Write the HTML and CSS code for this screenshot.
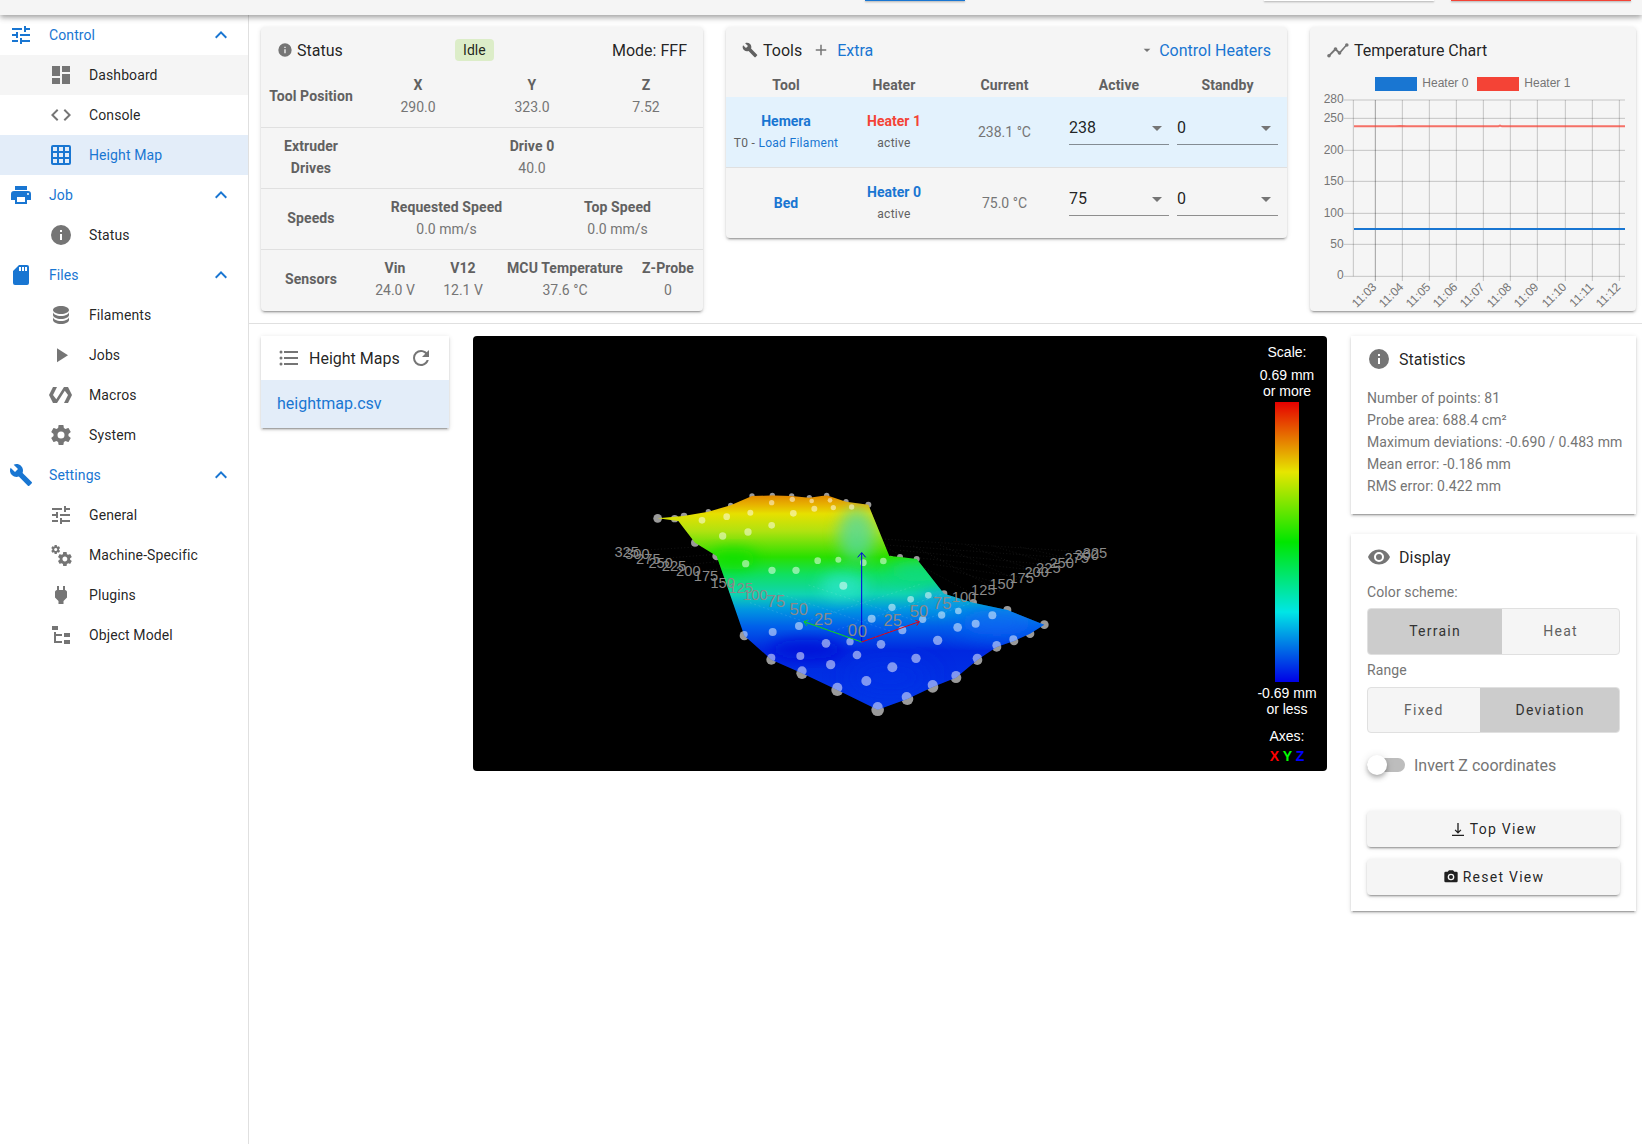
FILE: index.html
```html
<!DOCTYPE html>
<html lang="en">
<head>
<meta charset="utf-8">
<title>Height Map</title>
<link rel="stylesheet" href="styles.css">
</head>
<body>
<svg class="sprite" aria-hidden="true">
  <symbol id="i-tune" viewBox="0 0 24 24"><path d="M3,17V19H9V17H3M3,5V7H13V5H3M13,21V19H21V17H13V15H11V21H13M7,9V11H3V13H7V15H9V9H7M21,13V11H11V13H21M15,9H17V7H21V5H17V3H15V9Z"/></symbol>
  <symbol id="i-dash" viewBox="0 0 24 24"><path d="M13,3V9H21V3M13,21H21V11H13M3,21H11V15H3M3,13H11V3H3V13Z"/></symbol>
  <symbol id="i-code" viewBox="0 0 24 24"><path d="M14.6,16.6L19.2,12L14.6,7.4L16,6L22,12L16,18L14.6,16.6M9.4,16.6L4.8,12L9.4,7.4L8,6L2,12L8,18L9.4,16.6Z"/></symbol>
  <symbol id="i-grid" viewBox="0 0 24 24"><path d="M10,4V8H14V4H10M16,4V8H20V4H16M16,10V14H20V10H16M16,16V20H20V16H16M14,20V16H10V20H14M8,20V16H4V20H8M8,14V10H4V14H8M8,8V4H4V8H8M10,14H14V10H10V14M4,2H20A2,2 0 0,1 22,4V20A2,2 0 0,1 20,22H4C2.92,22 2,21.1 2,20V4A2,2 0 0,1 4,2Z"/></symbol>
  <symbol id="i-print" viewBox="0 0 24 24"><path d="M18,3H6V7H18M19,12A1,1 0 0,1 18,11A1,1 0 0,1 19,10A1,1 0 0,1 20,11A1,1 0 0,1 19,12M16,19H8V14H16M19,8H5A3,3 0 0,0 2,11V17H6V21H18V17H22V11A3,3 0 0,0 19,8Z"/></symbol>
  <symbol id="i-info" viewBox="0 0 24 24"><path d="M13,9H11V7H13M13,17H11V11H13M12,2A10,10 0 0,0 2,12A10,10 0 0,0 12,22A10,10 0 0,0 22,12A10,10 0 0,0 12,2Z"/></symbol>
  <symbol id="i-sd" viewBox="0 0 24 24"><path d="M18,8H16V4H18M15,8H13V4H15M12,8H10V4H12M18,2H10L4,8V20A2,2 0 0,0 6,22H18A2,2 0 0,0 20,20V4A2,2 0 0,0 18,2Z"/></symbol>
  <symbol id="i-db" viewBox="0 0 24 24"><path d="M12,3C7.58,3 4,4.79 4,7C4,9.21 7.58,11 12,11C16.42,11 20,9.21 20,7C20,4.79 16.42,3 12,3M4,9V12C4,14.21 7.58,16 12,16C16.42,16 20,14.21 20,12V9C20,11.21 16.42,13 12,13C7.58,13 4,11.21 4,9M4,14V17C4,19.21 7.58,21 12,21C16.42,21 20,19.21 20,17V14C20,16.21 16.42,18 12,18C7.58,18 4,16.21 4,14Z"/></symbol>
  <symbol id="i-play" viewBox="0 0 24 24"><path d="M8,5.14V19.14L19,12.14L8,5.14Z"/></symbol>
  <symbol id="i-poly" viewBox="0 0 24 24"><path d="M19,4H15L7.3,16.2L4,12L8,4H4L0,12L4,20H8L15.8,7.8L19,12L15,20H19L23,12L19,4Z"/></symbol>
  <symbol id="i-cog" viewBox="0 0 24 24"><path d="M12,15.5A3.5,3.5 0 0,1 8.5,12A3.5,3.5 0 0,1 12,8.5A3.5,3.5 0 0,1 15.5,12A3.5,3.5 0 0,1 12,15.5M19.43,12.97C19.47,12.65 19.5,12.33 19.5,12C19.5,11.67 19.47,11.34 19.43,11L21.54,9.37C21.73,9.22 21.78,8.95 21.66,8.73L19.66,5.27C19.54,5.05 19.27,4.96 19.05,5.05L16.56,6.05C16.04,5.66 15.5,5.32 14.87,5.07L14.5,2.42C14.46,2.18 14.25,2 14,2H10C9.75,2 9.54,2.18 9.5,2.42L9.13,5.07C8.5,5.32 7.96,5.66 7.44,6.05L4.95,5.05C4.73,4.96 4.46,5.05 4.34,5.27L2.34,8.73C2.21,8.95 2.27,9.22 2.46,9.37L4.57,11C4.53,11.34 4.5,11.67 4.5,12C4.5,12.33 4.53,12.65 4.57,12.97L2.46,14.63C2.27,14.78 2.21,15.05 2.34,15.27L4.34,18.73C4.46,18.95 4.73,19.03 4.95,18.95L7.44,17.94C7.96,18.34 8.5,18.68 9.13,18.93L9.5,21.58C9.54,21.82 9.75,22 10,22H14C14.25,22 14.46,21.82 14.5,21.58L14.87,18.93C15.5,18.67 16.04,18.34 16.56,17.94L19.05,18.95C19.27,19.03 19.54,18.95 19.66,18.73L21.66,15.27C21.78,15.05 21.73,14.78 21.54,14.63L19.43,12.97Z"/></symbol>
  <symbol id="i-wrench" viewBox="0 0 24 24"><path d="M22.7,19L13.6,9.9C14.5,7.6 14,4.9 12.1,3C10.1,1 7.1,0.6 4.7,1.7L9,6L6,9L1.6,4.7C0.4,7.1 0.9,10.1 2.9,12.1C4.8,14 7.5,14.5 9.8,13.6L18.9,22.7C19.3,23.1 19.9,23.1 20.3,22.7L22.6,20.4C23.1,20 23.1,19.3 22.7,19Z"/></symbol>
  <symbol id="i-cogs" viewBox="0 0 24 24"><path d="M15.9,18.45C17.25,18.45 18.35,17.35 18.35,16C18.35,14.65 17.25,13.55 15.9,13.55C14.54,13.55 13.45,14.65 13.45,16C13.45,17.35 14.54,18.45 15.9,18.45M21.1,16.68L22.58,17.84C22.71,17.95 22.75,18.13 22.66,18.29L21.26,20.71C21.17,20.86 21,20.92 20.83,20.86L19.09,20.16C18.73,20.44 18.33,20.67 17.91,20.85L17.64,22.7C17.62,22.87 17.47,23 17.3,23H14.5C14.32,23 14.18,22.87 14.15,22.7L13.89,20.85C13.46,20.67 13.07,20.44 12.71,20.16L10.96,20.86C10.81,20.92 10.62,20.86 10.54,20.71L9.14,18.29C9.05,18.13 9.09,17.95 9.22,17.84L10.7,16.68L10.65,16L10.7,15.31L9.22,14.16C9.09,14.05 9.05,13.86 9.14,13.71L10.54,11.29C10.62,11.13 10.81,11.07 10.96,11.13L12.71,11.84C13.07,11.56 13.46,11.32 13.89,11.15L14.15,9.29C14.18,9.13 14.32,9 14.5,9H17.3C17.47,9 17.62,9.13 17.64,9.29L17.91,11.15C18.33,11.32 18.73,11.56 19.09,11.84L20.83,11.13C21,11.07 21.17,11.13 21.26,11.29L22.66,13.71C22.75,13.86 22.71,14.05 22.58,14.16L21.1,15.31L21.15,16L21.1,16.68M6.69,8.07C7.56,8.07 8.26,7.37 8.26,6.5C8.26,5.63 7.56,4.92 6.69,4.92A1.58,1.58 0 0,0 5.11,6.5C5.11,7.37 5.82,8.07 6.69,8.07M10.03,6.94L11,7.68C11.07,7.75 11.09,7.87 11.03,7.97L10.13,9.53C10.08,9.63 9.96,9.67 9.86,9.63L8.74,9.18L8,9.62L7.81,10.81C7.79,10.92 7.7,11 7.59,11H5.79C5.67,11 5.58,10.92 5.56,10.81L5.4,9.62L4.64,9.18L3.5,9.63C3.41,9.67 3.3,9.63 3.24,9.53L2.34,7.97C2.28,7.87 2.31,7.75 2.39,7.68L3.34,6.94L3.31,6.5L3.34,6.06L2.39,5.32C2.31,5.25 2.28,5.13 2.34,5.03L3.24,3.47C3.3,3.37 3.41,3.33 3.5,3.37L4.63,3.82L5.4,3.38L5.56,2.19C5.58,2.08 5.67,2 5.79,2H7.59C7.7,2 7.79,2.08 7.81,2.19L8,3.38L8.74,3.82L9.86,3.37C9.96,3.33 10.08,3.37 10.13,3.47L11.03,5.03C11.09,5.13 11.07,5.25 11,5.32L10.03,6.06L10.06,6.5L10.03,6.94Z"/></symbol>
  <symbol id="i-plug" viewBox="0 0 24 24"><path d="M16,7V3H14V7H10V3H8V7H8C7,7 6,8 6,9V14.5L9.5,18V21H14.5V18L18,14.5V9C18,8 17,7 16,7Z"/></symbol>
  <symbol id="i-tree" viewBox="0 0 24 24"><path d="M3,3H9V7H3V3M15,10H21V14H15V10M15,17H21V21H15V17M13,13H7V18H13V20H7L5,20V9H7V11H13V13Z"/></symbol>
  <symbol id="i-up" viewBox="0 0 24 24"><path d="M7.41,15.41L12,10.83L16.59,15.41L18,14L12,8L6,14L7.41,15.41Z"/></symbol>
  <symbol id="i-plus" viewBox="0 0 24 24"><path d="M19,13H13V19H11V13H5V11H11V5H13V11H19V13Z"/></symbol>
  <symbol id="i-down" viewBox="0 0 24 24"><path d="M7,10L12,15L17,10H7Z"/></symbol>
  <symbol id="i-chart" viewBox="0 0 24 24"><path d="M3.5,18.5L9.5,12.5L13.5,16.5L20.6,8L19.5,6.9L13.5,13.7L9.5,9.7L2.4,16.9Z"/><circle cx="3" cy="17.7" r="1.8"/><circle cx="9.5" cy="11" r="1.8"/><circle cx="13.5" cy="15" r="1.8"/><circle cx="20.8" cy="7" r="1.8"/></symbol>
  <symbol id="i-list" viewBox="0 0 24 24"><path d="M7,5H21V7H7V5M7,13V11H21V13H7M4,4.5A1.5,1.5 0 0,1 5.5,6A1.5,1.5 0 0,1 4,7.5A1.5,1.5 0 0,1 2.5,6A1.5,1.5 0 0,1 4,4.5M4,10.5A1.5,1.5 0 0,1 5.5,12A1.5,1.5 0 0,1 4,13.5A1.5,1.5 0 0,1 2.5,12A1.5,1.5 0 0,1 4,10.5M7,19V17H21V19H7M4,16.5A1.5,1.5 0 0,1 5.5,18A1.5,1.5 0 0,1 4,19.5A1.5,1.5 0 0,1 2.5,18A1.5,1.5 0 0,1 4,16.5Z"/></symbol>
  <symbol id="i-refresh" viewBox="0 0 24 24"><path d="M17.65,6.35C16.2,4.9 14.21,4 12,4A8,8 0 0,0 4,12A8,8 0 0,0 12,20C15.73,20 18.84,17.45 19.73,14H17.65C16.83,16.33 14.61,18 12,18A6,6 0 0,1 6,12A6,6 0 0,1 12,6C13.66,6 15.14,6.69 16.22,7.78L13,11H20V4L17.65,6.35Z"/></symbol>
  <symbol id="i-eye" viewBox="0 0 24 24"><path d="M12,9A3,3 0 0,0 9,12A3,3 0 0,0 12,15A3,3 0 0,0 15,12A3,3 0 0,0 12,9M12,17A5,5 0 0,1 7,12A5,5 0 0,1 12,7A5,5 0 0,1 17,12A5,5 0 0,1 12,17M12,4.5C7,4.5 2.73,7.61 1,12C2.73,16.39 7,19.5 12,19.5C17,19.5 21.27,16.39 23,12C21.27,7.61 17,4.5 12,4.5Z"/></symbol>
  <symbol id="i-top" viewBox="0 0 24 24"><path d="M11,3H13V15.5L15.8,12.7L17,14L12,19L7,14L8.2,12.7L11,15.5ZM3,20.5H21V22.5H3Z"/></symbol>
  <symbol id="i-cam" viewBox="0 0 24 24"><path d="M4,4H7L9,2H15L17,4H20A2,2 0 0,1 22,6V18A2,2 0 0,1 20,20H4A2,2 0 0,1 2,18V6A2,2 0 0,1 4,4M12,7A5,5 0 0,0 7,12A5,5 0 0,0 12,17A5,5 0 0,0 17,12A5,5 0 0,0 12,7M12,9A3,3 0 0,1 15,12A3,3 0 0,1 12,15A3,3 0 0,1 9,12A3,3 0 0,1 12,9Z"/></symbol>
</svg>

<div class="app">
  <header class="topbar">
    <span class="tb-btn tb-blue"></span>
    <span class="tb-btn tb-white"></span>
    <span class="tb-btn tb-red"></span>
  </header>
  <div class="body">
    <nav class="nav">
      <div class="nav-head"><svg class="ic"><use href="#i-tune"/></svg><span>Control</span><svg class="ic chev"><use href="#i-up"/></svg></div>
      <a class="nav-item hover"><svg class="ic"><use href="#i-dash"/></svg><span>Dashboard</span></a>
      <a class="nav-item"><svg class="ic"><use href="#i-code"/></svg><span>Console</span></a>
      <a class="nav-item active"><svg class="ic"><use href="#i-grid"/></svg><span>Height Map</span></a>
      <div class="nav-head"><svg class="ic"><use href="#i-print"/></svg><span>Job</span><svg class="ic chev"><use href="#i-up"/></svg></div>
      <a class="nav-item"><svg class="ic"><use href="#i-info"/></svg><span>Status</span></a>
      <div class="nav-head"><svg class="ic"><use href="#i-sd"/></svg><span>Files</span><svg class="ic chev"><use href="#i-up"/></svg></div>
      <a class="nav-item"><svg class="ic"><use href="#i-db"/></svg><span>Filaments</span></a>
      <a class="nav-item"><svg class="ic"><use href="#i-play"/></svg><span>Jobs</span></a>
      <a class="nav-item"><svg class="ic"><use href="#i-poly"/></svg><span>Macros</span></a>
      <a class="nav-item"><svg class="ic"><use href="#i-cog"/></svg><span>System</span></a>
      <div class="nav-head"><svg class="ic"><use href="#i-wrench"/></svg><span>Settings</span><svg class="ic chev"><use href="#i-up"/></svg></div>
      <a class="nav-item"><svg class="ic"><use href="#i-tune"/></svg><span>General</span></a>
      <a class="nav-item"><svg class="ic"><use href="#i-cogs"/></svg><span>Machine-Specific</span></a>
      <a class="nav-item"><svg class="ic"><use href="#i-plug"/></svg><span>Plugins</span></a>
      <a class="nav-item"><svg class="ic"><use href="#i-tree"/></svg><span>Object Model</span></a>
    </nav>

    <main class="main">
      <section class="top-row">
        <div class="card grey">
          <div class="card-head">
            <span class="title"><svg class="ic s16 grey-ic"><use href="#i-info"/></svg>Status</span>
            <span class="chip">Idle</span>
            <span class="mode">Mode: FFF</span>
          </div>
          <div class="srow">
            <div class="slabel">Tool Position</div>
            <div class="svals c3">
              <div><b>X</b><span>290.0</span></div>
              <div><b>Y</b><span>323.0</span></div>
              <div><b>Z</b><span>7.52</span></div>
            </div>
          </div>
          <div class="srow">
            <div class="slabel">Extruder<br>Drives</div>
            <div class="svals c1"><div><b>Drive 0</b><span>40.0</span></div></div>
          </div>
          <div class="srow">
            <div class="slabel">Speeds</div>
            <div class="svals c2">
              <div><b>Requested Speed</b><span>0.0 mm/s</span></div>
              <div><b>Top Speed</b><span>0.0 mm/s</span></div>
            </div>
          </div>
          <div class="srow last">
            <div class="slabel">Sensors</div>
            <div class="svals c4">
              <div><b>Vin</b><span>24.0 V</span></div>
              <div><b>V12</b><span>12.1 V</span></div>
              <div><b>MCU Temperature</b><span>37.6 °C</span></div>
              <div><b>Z-Probe</b><span>0</span></div>
            </div>
          </div>
        </div>

        <div class="card grey tools">
          <div class="card-head">
            <span class="title"><svg class="ic s16 dark-ic"><use href="#i-wrench"/></svg>Tools<svg class="ic s16 plus"><use href="#i-plus"/></svg><a class="link">Extra</a></span>
            <span class="title"><svg class="ic s16 caret"><use href="#i-down"/></svg><a class="link">Control Heaters</a></span>
          </div>
          <div class="trow thead"><span>Tool</span><span>Heater</span><span>Current</span><span class="ca">Active</span><span class="cs">Standby</span></div>
          <div class="trow tline sel">
            <div class="cell"><b class="blue">Hemera</b><small>T0 - <a class="link">Load Filament</a></small></div>
            <div class="cell"><b class="red">Heater 1</b><small>active</small></div>
            <div class="cell cur">238.1 °C</div>
            <div class="select ca"><span>238</span><svg class="ic arrow"><use href="#i-down"/></svg></div>
            <div class="select cs"><span>0</span><svg class="ic arrow"><use href="#i-down"/></svg></div>
          </div>
          <div class="trow">
            <div class="cell"><b class="blue">Bed</b></div>
            <div class="cell"><b class="blue">Heater 0</b><small>active</small></div>
            <div class="cell cur">75.0 °C</div>
            <div class="select ca"><span>75</span><svg class="ic arrow"><use href="#i-down"/></svg></div>
            <div class="select cs"><span>0</span><svg class="ic arrow"><use href="#i-down"/></svg></div>
          </div>
        </div>

        <div class="card grey">
          <div class="card-head chart-head">
            <span class="title"><svg class="ic grey-ic"><use href="#i-chart"/></svg>Temperature Chart</span>
          </div>
          <svg class="chart" viewBox="30 198 978 732">
            <rect x="225" y="228" width="126" height="42" fill="#1976d2"/>
            <text class="ct" x="367" y="257">Heater 0</text>
            <rect x="531" y="228" width="126" height="42" fill="#f44336"/>
            <text class="ct" x="673" y="257">Heater 1</text>
            <g class="ygrid">
              <path d="M131 297H975M131 352H975M131 448H975M131 541H975M131 637H975M131 730H975M131 826H975"/>
              <path d="M160 297V826M307 297V840M388 297V840M469 297V840M550 297V840M631 297V840M712 297V840M796 297V840M877 297V840M958 297V840"/>
              <path class="dk" d="M226 297V840"/>
            </g>
            <g class="cy">
              <text x="131" y="306">280</text><text x="131" y="363">250</text><text x="131" y="459">200</text>
              <text x="131" y="552">150</text><text x="131" y="648">100</text><text x="131" y="741">50</text><text x="131" y="835">0</text>
            </g>
            <path d="M162 376H285L300 375L320 376H595L600 374L606 376H975" fill="none" stroke="#f44336" stroke-width="6" opacity=".75"/>
            <path d="M162 684H975" fill="none" stroke="#1976d2" stroke-width="6"/>
            <g class="cx">
              <text transform="translate(232 860) rotate(-45)">11:03</text>
              <text transform="translate(313 860) rotate(-45)">11:04</text>
              <text transform="translate(394 860) rotate(-45)">11:05</text>
              <text transform="translate(475 860) rotate(-45)">11:06</text>
              <text transform="translate(556 860) rotate(-45)">11:07</text>
              <text transform="translate(637 860) rotate(-45)">11:08</text>
              <text transform="translate(718 860) rotate(-45)">11:09</text>
              <text transform="translate(802 860) rotate(-45)">11:10</text>
              <text transform="translate(883 860) rotate(-45)">11:11</text>
              <text transform="translate(964 860) rotate(-45)">11:12</text>
            </g>
          </svg>
        </div>
      </section>

      <section class="bottom-row">
        <div class="card white maps">
          <div class="card-head maps-head">
            <span class="title"><svg class="ic grey-ic"><use href="#i-list"/></svg><span class="tt">Height Maps</span><svg class="ic grey-ic"><use href="#i-refresh"/></svg></span>
          </div>
          <a class="map-item">heightmap.csv</a>
        </div>

        <div class="panel">
          <svg class="surface" viewBox="0 0 1560 780">
            <defs>
              <linearGradient id="sg" gradientUnits="userSpaceOnUse" x1="0" y1="70" x2="0" y2="720">
                <stop offset="0" stop-color="#e08400"/>
                <stop offset=".05" stop-color="#e8b400"/>
                <stop offset=".09" stop-color="#e6e000"/>
                <stop offset=".17" stop-color="#b0e210"/>
                <stop offset=".29" stop-color="#28e000"/>
                <stop offset=".37" stop-color="#10e060"/>
                <stop offset=".46" stop-color="#10d4b0"/>
                <stop offset=".53" stop-color="#0098e0"/>
                <stop offset=".61" stop-color="#0060ea"/>
                <stop offset=".72" stop-color="#0028e0"/>
                <stop offset="1" stop-color="#0038e8"/>
              </linearGradient>
              <filter id="b1" x="-50%" y="-50%" width="200%" height="200%"><feGaussianBlur stdDeviation="22"/></filter>
              <filter id="b2" x="-50%" y="-50%" width="200%" height="200%"><feGaussianBlur stdDeviation="38"/></filter>
              <clipPath id="sc"><path d="M173 142L250 135L325 122L392 103L456 75L517 73L575 75L628 80L680 73L738 92L805 101L868 255L900 258L950 264L1032 368L1120 395L1222 417L1333 461L1290 488L1242 510L1190 528L1132 567L1068 620L998 648L922 684L833 716L712 657L606 607L514 566L433 494L350 255L285 215L235 150Z"/></clipPath>
            </defs>
            <g class="floor">
              <path d="M785 200L1490 245M830 220L1420 262M900 238L1380 285M950 260L1330 300M1000 280L1270 320M1060 300L1210 340M785 200L80 240M740 220L150 265M680 240L220 285M620 265L300 300"/>
              <path d="M860 230L1140 380M940 225L1200 360M1020 222L1270 335M1100 222L1330 310M1180 225L1390 290M1260 228L1440 270"/>
            </g>
            <g class="gdots">
              <circle cx="173" cy="142" r="13"/><circle cx="224" cy="143" r="11"/><circle cx="252" cy="135" r="10"/><circle cx="325" cy="122" r="8"/><circle cx="392" cy="103" r="8"/><circle cx="456" cy="75" r="8"/><circle cx="517" cy="73" r="8"/><circle cx="575" cy="75" r="8"/><circle cx="628" cy="80" r="8"/><circle cx="680" cy="73" r="8"/><circle cx="738" cy="92" r="8"/><circle cx="805" cy="101" r="9"/>
              <circle cx="285" cy="215" r="12"/><circle cx="350" cy="255" r="13"/><circle cx="433" cy="494" r="14"/><circle cx="514" cy="566" r="15"/><circle cx="606" cy="607" r="17"/><circle cx="712" cy="657" r="18"/><circle cx="833" cy="716" r="19"/><circle cx="922" cy="684" r="18"/><circle cx="998" cy="648" r="17"/><circle cx="1068" cy="620" r="16"/><circle cx="1132" cy="567" r="15"/><circle cx="1190" cy="528" r="14"/><circle cx="1242" cy="510" r="13"/><circle cx="1290" cy="488" r="13"/><circle cx="1333" cy="461" r="13"/><circle cx="1222" cy="417" r="12"/><circle cx="1120" cy="395" r="11"/><circle cx="1032" cy="368" r="10"/><circle cx="950" cy="264" r="9"/><circle cx="900" cy="258" r="9"/><circle cx="872" cy="262" r="8"/>
            </g>
            <g clip-path="url(#sc)">
              <rect x="150" y="60" width="1200" height="670" fill="url(#sg)"/>
              <ellipse cx="770" cy="190" rx="55" ry="80" fill="#50d8a8" opacity=".75" filter="url(#b1)"/>
              <ellipse cx="730" cy="345" rx="70" ry="40" fill="#30e8d0" opacity=".7" filter="url(#b1)"/>
              <ellipse cx="400" cy="265" rx="70" ry="30" fill="#10e000" opacity=".9" filter="url(#b1)"/>
              <ellipse cx="620" cy="535" rx="110" ry="28" fill="#0010d8" opacity=".9" filter="url(#b1)"/>
              <ellipse cx="1190" cy="455" rx="130" ry="40" fill="#0a68f4" opacity=".9" filter="url(#b2)"/>
              <ellipse cx="1030" cy="390" rx="70" ry="30" fill="#1090f0" opacity=".7" filter="url(#b1)"/>
              <ellipse cx="950" cy="300" rx="80" ry="30" fill="#10d890" opacity=".7" filter="url(#b1)"/>
              <ellipse cx="870" cy="620" rx="130" ry="45" fill="#0030e8" opacity=".8" filter="url(#b2)"/>
              <path class="sfloor" d="M785 513L1130 390M700 480L1040 365M620 450L960 340M785 513L450 395M870 480L530 365M950 450L620 340"/>
              <g class="wdots">
                <circle cx="515" cy="95" r="8"/><circle cx="577" cy="85" r="8"/><circle cx="635" cy="90" r="7"/><circle cx="690" cy="88" r="7"/><circle cx="755" cy="108" r="8"/><circle cx="700" cy="110" r="8"/><circle cx="643" cy="113" r="9"/><circle cx="580" cy="127" r="10"/><circle cx="451" cy="125" r="9"/><circle cx="380" cy="137" r="10"/><circle cx="306" cy="148" r="10"/><circle cx="515" cy="163" r="10"/><circle cx="444" cy="183" r="11"/><circle cx="368" cy="195" r="11"/><circle cx="437" cy="278" r="11"/><circle cx="516" cy="298" r="11"/><circle cx="588" cy="298" r="11"/><circle cx="653" cy="269" r="10"/><circle cx="715" cy="266" r="9"/><circle cx="790" cy="275" r="10"/><circle cx="850" cy="270" r="10"/><circle cx="730" cy="344" r="12"/><circle cx="597" cy="465" r="12"/><circle cx="518" cy="483" r="12"/><circle cx="678" cy="517" r="13"/><circle cx="750" cy="512" r="11"/><circle cx="843" cy="520" r="13"/><circle cx="815" cy="443" r="12"/><circle cx="876" cy="409" r="11"/><circle cx="932" cy="385" r="10"/><circle cx="985" cy="373" r="10"/><circle cx="968" cy="445" r="11"/><circle cx="907" cy="478" r="12"/><circle cx="1025" cy="432" r="11"/><circle cx="1075" cy="420" r="10"/><circle cx="1177" cy="433" r="12"/><circle cx="1127" cy="458" r="12"/><circle cx="1073" cy="469" r="13"/><circle cx="1013" cy="508" r="14"/><circle cx="948" cy="562" r="14"/><circle cx="877" cy="589" r="15"/><circle cx="799" cy="630" r="15"/><circle cx="771" cy="552" r="13"/><circle cx="692" cy="581" r="14"/><circle cx="601" cy="555" r="12"/><circle cx="1240" cy="505" r="12"/><circle cx="1190" cy="523" r="13"/><circle cx="1132" cy="562" r="14"/><circle cx="1068" cy="614" r="14"/><circle cx="998" cy="642" r="15"/><circle cx="920" cy="678" r="15"/><circle cx="833" cy="708" r="15"/><circle cx="712" cy="650" r="15"/><circle cx="606" cy="600" r="14"/><circle cx="514" cy="560" r="12"/><circle cx="433" cy="490" r="10"/>
              </g>
            </g>
            <path d="M785 513V245M773 259L785 245L797 259" fill="none" stroke="#0000e0" stroke-width="3"/>
            <path d="M785 513L958 452M946 448L958 452L950 464" fill="none" stroke="#e00010" stroke-width="3"/>
            <path d="M785 513L612 452M624 447L612 452L620 464" fill="none" stroke="#10d810" stroke-width="3"/>
            <g class="lbl">
              <text x="80" y="258">325</text><text x="112" y="263">300</text><text x="145" y="279">275</text><text x="182" y="290">250</text><text x="222" y="300">225</text><text x="265" y="315">200</text><text x="318" y="330">175</text><text x="368" y="350">150</text>
              <text x="422" y="366">125</text><text x="466" y="388">100</text><text class="big" x="528" y="408">75</text><text class="big" x="596" y="433">50</text><text class="big" x="670" y="461">25</text><text class="big" x="757" y="494">0</text><text class="big" x="787" y="499">0</text><text class="big" x="878" y="466">25</text><text class="big" x="957" y="438">50</text><text class="big" x="1027" y="414">75</text>
              <text x="1092" y="393">100</text><text x="1150" y="372">125</text><text x="1205" y="355">150</text><text x="1265" y="335">175</text><text x="1310" y="318">200</text><text x="1345" y="305">225</text><text x="1385" y="292">250</text><text x="1430" y="275">275</text><text x="1460" y="266">300</text><text x="1485" y="261">325</text>
            </g>
          </svg>
          <div class="scale">
            <div class="s-a">Scale:</div>
            <div class="s-b">0.69 mm<br>or more</div>
            <div class="s-bar"></div>
            <div class="s-c">-0.69 mm<br>or less</div>
            <div class="s-d">Axes:</div>
            <div class="s-e"><span class="ax-x">X</span> <span class="ax-y">Y</span> <span class="ax-z">Z</span></div>
          </div>
        </div>

        <div class="side">
          <div class="card white">
            <div class="card-head side-head"><span class="title"><svg class="ic grey-ic"><use href="#i-info"/></svg><span class="tt">Statistics</span></span></div>
            <div class="stats">
              <div>Number of points: 81</div>
              <div>Probe area: 688.4 cm²</div>
              <div>Maximum deviations: -0.690 / 0.483 mm</div>
              <div>Mean error: -0.186 mm</div>
              <div>RMS error: 0.422 mm</div>
            </div>
          </div>
          <div class="card white">
            <div class="card-head side-head"><span class="title"><svg class="ic grey-ic"><use href="#i-eye"/></svg><span class="tt">Display</span></span></div>
            <div class="display">
              <div class="lab">Color scheme:</div>
              <div class="toggle"><span class="on">Terrain</span><span>Heat</span></div>
              <div class="lab r">Range</div>
              <div class="toggle t2"><span>Fixed</span><span class="on">Deviation</span></div>
              <div class="switch"><span class="track"><span class="thumb"></span></span><span class="sw-label">Invert Z coordinates</span></div>
              <button class="btn first"><svg class="ic s16"><use href="#i-top"/></svg>Top View</button>
              <button class="btn"><svg class="ic s16"><use href="#i-cam"/></svg>Reset View</button>
            </div>
          </div>
        </div>
      </section>
    </main>
  </div>
</div>
</body>
</html>
```

FILE: styles.css
```css
* { box-sizing: border-box; }
html, body { margin: 0; height: 100%; overflow: hidden; background: #fff; }
body { font-family: Roboto, "Liberation Sans", sans-serif; font-size: 14px; color: rgba(0,0,0,.87); }
.sprite { display: none; }
.ic { width: 24px; height: 24px; fill: #757575; flex: none; display: block; }
.s16 { width: 16px; height: 16px; }
.grey-ic { fill: #757575; }
.dark-ic { fill: #616161; }

.app { display: flex; flex-direction: column; height: 100vh; }
.topbar { height: 15px; flex: none; background: #f5f5f5; display: flex; align-items: flex-start; position: relative; z-index: 2;
  box-shadow: 0 2px 4px -1px rgba(0,0,0,.2), 0 4px 5px 0 rgba(0,0,0,.14), 0 1px 10px 0 rgba(0,0,0,.12); }
.tb-btn { height: 1px; display: block; box-shadow: 0 1px 2px rgba(0,0,0,.4); }
.tb-blue { width: 100px; margin-left: 865px; background: #1976d2; }
.tb-white { width: 170px; margin-left: 299px; background: #fff; }
.tb-red { width: 180px; margin-left: 17px; background: #f44336; }

.body { flex: 1; display: flex; min-height: 0; }
.nav { width: 249px; flex: none; border-right: 1px solid #e0e0e0; background: #fff; }
.nav-head, .nav-item { height: 40px; display: flex; align-items: center; letter-spacing: .1px; }
.nav-head { padding: 0 15px 0 9px; gap: 16px; color: #1976d2; }
.nav-head .ic { fill: #1976d2; }
.nav-head .chev { margin-left: auto; }
.nav-item { padding-left: 49px; gap: 16px; color: rgba(0,0,0,.87); }
.nav-item.hover { background: #f5f5f5; }
.nav-item.active { background: #e3edf9; color: #1976d2; }
.nav-item.active .ic { fill: #1976d2; }

.main { flex: 1; min-width: 0; }
.top-row { display: grid; grid-template-columns: 442px 1fr 326px; gap: 23px; padding: 12px 6px 12px 12px; border-bottom: 1px solid #e0e0e0; align-items: stretch; }
.bottom-row { display: grid; grid-template-columns: 188px 854px 285px; gap: 24px; padding: 12px 6px 0 12px; align-items: start; }
.card { border-radius: 4px; box-shadow: 0 3px 1px -2px rgba(0,0,0,.2), 0 2px 2px 0 rgba(0,0,0,.14), 0 1px 5px 0 rgba(0,0,0,.12); }
.card.grey { background: #f5f5f5; }
.card.white { background: #fff; border-radius: 0; }
.tools { align-self: start; }

.card-head { height: 40px; padding: 6px 16px 0; display: flex; align-items: center; justify-content: space-between; font-size: 16px; }
.title { display: flex; align-items: center; gap: 4px; }
.chip { background: #dcedc8; border-radius: 4px; height: 22px; padding: 0 8px; font-size: 14px; line-height: 22px; margin-right: 6px; }
.link { color: #1976d2; }

.srow { display: flex; height: 61px; padding: 7px 0 9px; border-bottom: 1px solid #e0e0e0; line-height: 22px; color: #616161; }
.srow.last { border-bottom: 0; height: 60px; }
.slabel { width: 100px; flex: none; text-align: center; font-weight: 700; align-self: center; letter-spacing: .1px; }
.svals { flex: 1; display: grid; text-align: center; }
.svals div { display: flex; flex-direction: column; white-space: nowrap; }
.svals b { font-weight: 700; letter-spacing: .1px; }
.svals span { color: #757575; }
.c1 { grid-template-columns: 1fr; }
.c2 { grid-template-columns: 1fr 1fr; }
.c3 { grid-template-columns: 1fr 1fr 1fr; }
.c4 { grid-template-columns: 68px 68px 136px 70px; }

.tools .plus { margin: 0 3px 0 6px; width: 18px; height: 18px; }
.caret { margin-right: 0; }
.tools .card-head .title .dark-ic { margin-right: 1px; }
.trow { display: grid; grid-template-columns: 120px 96px 125px 106px 114px; align-items: center; height: 70px; line-height: 22px; text-align: center; }
.trow.thead { height: 30px; padding-top: 6px; font-weight: 700; color: #616161; letter-spacing: .1px; }
.trow.thead .ca { margin: 0 4px 0 2px; }
.trow.thead .cs { margin: 0 9px 0 4px; }
.tline { height: 71px; border-bottom: 1px solid #e0e0e0; }
.sel { background: #e3f2fd; }
.cell { display: flex; flex-direction: column; align-items: center; color: #616161; }
.cell b { font-weight: 700; }
.cell small { font-size: 12px; color: #616161; letter-spacing: .3px; }
.blue { color: #1976d2; }
.red { color: #f44336; }
.cur { color: #757575; }
.select { height: 30px; margin-bottom: 4px; display: flex; align-items: flex-start; justify-content: space-between; border-bottom: 1px solid rgba(0,0,0,.42); font-size: 16px; color: rgba(0,0,0,.87); text-align: left; line-height: 26px; }
.select.ca { margin-left: 2px; margin-right: 4px; }
.select.cs { margin-left: 4px; margin-right: 9px; }
.arrow { margin: 1px 0 0; }

.chart-head { justify-content: flex-start; }
.chart { width: 326px; height: 244px; display: block; }
.ct { font: 36px "Liberation Sans", sans-serif; fill: #757575; }
.ygrid path { fill: none; stroke: rgba(0,0,0,.2); stroke-width: 3; }
.ygrid .dk { stroke: rgba(0,0,0,.35); }
.cy text { font: 36px "Liberation Sans", sans-serif; fill: #757575; text-anchor: end; }
.cx text { font: 36px "Liberation Sans", sans-serif; fill: #757575; text-anchor: end; }

.maps-head { height: 44px; padding: 0 16px; justify-content: flex-start; }
.maps-head .tt { margin: 0 5px 0 4px; }
.map-item { display: block; height: 48px; line-height: 48px; padding-left: 16px; background: #e3edf9; color: #1976d2; font-size: 16px; }

.panel { position: relative; height: 435px; background: #000; border-radius: 4px; overflow: hidden; }
.surface { position: absolute; left: 127px; top: 135px; width: 520px; height: 260px; }
.floor path { fill: none; stroke: #fff; stroke-width: 2; stroke-dasharray: 3 7; opacity: .12; }
.sfloor { fill: none; stroke: #fff; stroke-width: 2; stroke-dasharray: 6 8; opacity: .18; }
.gdots circle { fill: #9a9a9a; }
.wdots circle { fill: #fff; opacity: .5; }
.lbl text { font: 44px "Liberation Sans", sans-serif; fill: #8a8a8a; text-anchor: middle; }
.lbl .big { font-size: 50px; }
.scale { position: absolute; right: 0; top: 0; width: 80px; display: flex; flex-direction: column; align-items: center; color: #fff; font: 14px/16px "Liberation Sans", sans-serif; text-align: center; padding-top: 8px; }
.s-b { margin-top: 7px; }
.s-bar { width: 24px; height: 280px; margin-top: 3px; background: linear-gradient(#e60000, #e6e600 25%, #00e600 50%, #00e6e6 75%, #0000e6); }
.s-c { margin-top: 3px; }
.s-d { margin-top: 11px; }
.s-e { margin-top: 4px; font-weight: 700; }
.ax-x { color: #f00; }
.ax-y { color: #0f0; }
.ax-z { color: #00f; }

.side { display: flex; flex-direction: column; gap: 20px; }
.side-head { height: 46px; padding: 0 16px; justify-content: flex-start; }
.side-head .tt { margin-left: 4px; }
.stats { padding: 5px 16px 17px; color: #757575; line-height: 22px; letter-spacing: .1px; white-space: nowrap; }
.display { padding: 1px 16px 16px; }
.lab { line-height: 22px; color: #757575; letter-spacing: .1px; }
.lab.r { margin-top: 4px; }
.toggle { display: flex; height: 47px; margin-top: 5px; border: 1px solid #e0e0e0; border-radius: 4px; overflow: hidden; background: #f5f5f5; letter-spacing: 1.25px; color: #616161; }
.toggle.t2 { margin-top: 6px; height: 46px; }
.toggle span { flex: 1 1 auto; padding: 0 36px; text-align: center; line-height: 44px; }
.toggle .on { background: #ccc; color: #333; }
.toggle:not(.t2) span { padding: 0 41px; }
.switch { display: flex; align-items: center; height: 24px; margin-top: 20px; }
.track { display: block; position: relative; width: 38px; height: 14px; border-radius: 7px; background: #bdbdbd; flex: none; }
.thumb { display: block; position: absolute; left: 0; top: -3px; width: 20px; height: 20px; border-radius: 50%; background: #fff; box-shadow: 0 2px 4px -1px rgba(0,0,0,.2), 0 4px 5px 0 rgba(0,0,0,.14), 0 1px 10px 0 rgba(0,0,0,.12); }
.sw-label { margin-left: 9px; font-size: 16px; color: #757575; }
.btn { display: flex; align-items: center; justify-content: center; gap: 4px; width: 100%; height: 36px; margin-top: 12px; border: 0; border-radius: 4px; background: #f5f5f5; font: 14px Roboto, sans-serif; letter-spacing: 1.25px; color: rgba(0,0,0,.87); box-shadow: 0 3px 1px -2px rgba(0,0,0,.2), 0 2px 2px 0 rgba(0,0,0,.14), 0 1px 5px 0 rgba(0,0,0,.12); }
.btn .ic { fill: rgba(0,0,0,.87); }
.btn.first { margin-top: 34px; }
```
